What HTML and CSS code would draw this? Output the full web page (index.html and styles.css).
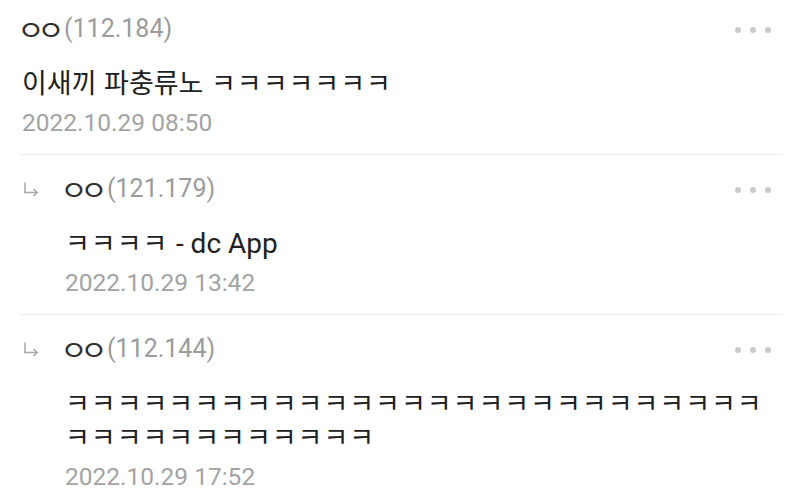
FILE: index.html
```html
<!DOCTYPE html>
<html lang="ko">
  <head>
    <meta charset="UTF-8" />
    <meta name="viewport" content="width=device-width, initial-scale=1.0" />
    <title>댓글</title>
    <link rel="stylesheet" href="styles.css">
  </head>
  <body>
    <div class="comment-list">
      <div class="comment">
        <div class="comment-main">
          <div class="comment-head">
            <div class="writer"><span class="nick"><b>ㅇ</b><b>ㅇ</b></span><span class="ip">(112.184)</span></div>
            <div class="more"><i></i><i></i><i></i></div>
          </div>
          <div class="comment-body">이새끼 파충류노 <span class="kk">ㅋㅋㅋㅋㅋㅋㅋ</span></div>
          <div class="comment-date">2022.10.29 08:50</div>
        </div>
      </div>

      <div class="comment reply">
        <svg class="reply-icon" width="16" height="15" viewBox="0 0 16 15">
          <path d="M2 0.5 V10.5 H14 M10.5 7 L14.2 10.5 L10.5 14" fill="none" stroke="#a6a6a6" stroke-width="1.5" />
        </svg>
        <div class="comment-main">
          <div class="comment-head">
            <div class="writer"><span class="nick"><b>ㅇ</b><b>ㅇ</b></span><span class="ip">(121.179)</span></div>
            <div class="more"><i></i><i></i><i></i></div>
          </div>
          <div class="comment-body"><span class="kk">ㅋㅋㅋㅋ</span> <span class="en">- dc App</span></div>
          <div class="comment-date">2022.10.29 13:42</div>
        </div>
      </div>

      <div class="comment reply">
        <svg class="reply-icon" width="16" height="15" viewBox="0 0 16 15">
          <path d="M2 0.5 V10.5 H14 M10.5 7 L14.2 10.5 L10.5 14" fill="none" stroke="#a6a6a6" stroke-width="1.5" />
        </svg>
        <div class="comment-main">
          <div class="comment-head">
            <div class="writer"><span class="nick"><b>ㅇ</b><b>ㅇ</b></span><span class="ip">(112.144)</span></div>
            <div class="more"><i></i><i></i><i></i></div>
          </div>
          <div class="comment-body"><span class="kk">ㅋㅋㅋㅋㅋㅋㅋㅋㅋㅋㅋㅋㅋㅋㅋㅋㅋㅋㅋㅋㅋㅋㅋㅋㅋㅋㅋㅋㅋㅋㅋㅋㅋㅋㅋㅋㅋㅋㅋ</span></div>
          <div class="comment-date">2022.10.29 17:52</div>
        </div>
      </div>
    </div>
  </body>
</html>
```

FILE: styles.css
```css
html,
body {
  margin: 0;
  padding: 0;
  background: #ffffff;
  font-family: Roboto, "Noto Sans CJK KR", sans-serif;
  overflow: hidden;
}
.comment-list {
  padding: 0 18px 0 20px;
}
.comment {
  display: flex;
  align-items: flex-start;
  padding: 19px 0 16px 2px;
  border-bottom: 1px solid #ececec;
}
.comment:first-child {
  padding-top: 14px;
}
.comment:last-child {
  border-bottom: none;
}
.reply-icon {
  flex: none;
  margin: 8px 26px 0 1px;
}
.comment-main {
  flex: 1;
  min-width: 0;
}
.comment-head {
  display: flex;
  justify-content: space-between;
  align-items: flex-start;
  height: 30px;
}
.writer {
  display: flex;
  align-items: center;
  height: 30px;
  line-height: 30px;
  font-size: 25px;
  white-space: nowrap;
}
.nick {
  display: flex;
  margin-right: 2px;
}
.nick b {
  display: block;
  width: 20px;
  overflow: visible;
  font-weight: normal;
  color: #2e2e2e;
  font-family: "Noto Sans CJK KR", sans-serif;
  font-size: 27px;
  letter-spacing: -7px;
  text-indent: -3.5px;
  transform: scaleX(1.1);
}
.ip {
  color: #9b9b9b;
}
.comment-body {
  margin-top: 21px;
  font-size: 27px;
  line-height: 34px;
  color: #202020;
  font-family: "Noto Sans CJK KR", sans-serif;
  max-width: 712px;
}
.kk {
  letter-spacing: 1px;
}
.en {
  font-family: Roboto, sans-serif;
  font-size: 28px;
  line-height: 1;
}
.comment-date {
  margin-top: 9px;
  font-size: 24.5px;
  line-height: 30px;
  color: #a3a3a3;
}
.more {
  flex: none;
  display: flex;
  gap: 9px;
  padding: 13px 11px 0 0;
}
.more i {
  display: block;
  width: 6px;
  height: 6px;
  border-radius: 50%;
  background: #cbcbcb;
}
```
